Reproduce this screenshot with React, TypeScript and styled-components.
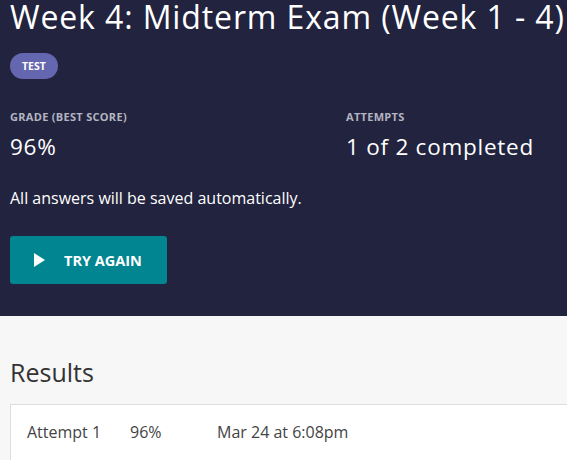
import styled, {createGlobalStyle} from "styled-components";

const GlobalStyle = createGlobalStyle`
    html, body {
        margin: 0;
        padding: 0;
        background: #f7f7f7;
        font-family: "Open Sans", "Liberation Sans", sans-serif;
    }
`

type Attempt = {
    label: string,
    score: string,
    date: string,
}

const attempts: Attempt[] = [
    {label: "Attempt 1", score: "96%", date: "Mar 24 at 6:08pm"},
]

const PlayIcon = () => (
    <svg width="11" height="14" viewBox="0 0 11 14" aria-hidden="true">
        <path d="M0 0 L11 7 L0 14 Z" fill="#fff"/>
    </svg>
)

export default function App() {
    return (
        <>
            <GlobalStyle/>
            <StyledHeader>
                <StyledTitle>Week 4: Midterm Exam (Week 1 - 4)</StyledTitle>
                <Badge>TEST</Badge>

                <StyledStats>
                    <StyledStat>
                        <StyledLabel>GRADE (BEST SCORE)</StyledLabel>
                        <StyledValue>96%</StyledValue>
                    </StyledStat>
                    <StyledStat>
                        <StyledLabel>ATTEMPTS</StyledLabel>
                        <StyledValue>1 of 2 completed</StyledValue>
                    </StyledStat>
                </StyledStats>

                <StyledNote>All answers will be saved automatically.</StyledNote>

                <StyledButton>
                    <PlayIcon/>
                    TRY AGAIN
                </StyledButton>
            </StyledHeader>

            <StyledResults>
                <StyledResultsTitle>Results</StyledResultsTitle>
                <StyledCard>
                    {attempts.map(a => (
                        <StyledRow key={a.label}>
                            <StyledCell $width={103}>{a.label}</StyledCell>
                            <StyledCell $width={87}>{a.score}</StyledCell>
                            <StyledCell>{a.date}</StyledCell>
                        </StyledRow>
                    ))}
                </StyledCard>
            </StyledResults>
        </>
    );
}

const StyledHeader = styled.header`
    background: #22233e;
    color: #fff;
    padding: 0 10px 32px;
    display: flex;
    flex-direction: column;
    align-items: flex-start;
`

const StyledTitle = styled.h1`
    margin: 0;
    font-size: 32px;
    font-weight: 400;
    line-height: 34px;
    white-space: nowrap;
    letter-spacing: 0.88px;
`

const Badge = styled.span`
    margin-top: 19px;
    background: #6466b0;
    color: #fff;
    font-size: 10.5px;
    font-weight: 700;
    height: 26px;
    padding: 0 12px;
    border-radius: 13px;
    display: flex;
    align-items: center;
`

const StyledStats = styled.div`
    margin-top: 31px;
    display: grid;
    grid-template-columns: 336px 1fr;
    width: 100%;
`

const StyledStat = styled.div`
    display: flex;
    flex-direction: column;
`

const StyledLabel = styled.span`
    font-size: 11px;
    font-weight: 700;
    letter-spacing: 0.3px;
    color: #b4b5c2;
    line-height: 14px;
`

const StyledValue = styled.span`
    margin-top: 8px;
    font-size: 22.5px;
    letter-spacing: 0.75px;
    line-height: 30px;
`

const StyledNote = styled.p`
    margin: 25px 0 0;
    font-size: 16px;
    line-height: 22px;
`

const StyledButton = styled.button`
    margin-top: 27px;
    width: 157px;
    height: 48px;
    border: none;
    border-radius: 3px;
    background: #008591;
    color: #fff;
    font-family: inherit;
    font-size: 14.5px;
    font-weight: 700;
    display: flex;
    align-items: center;
    gap: 19px;
    padding: 0 0 0 24px;
`

const StyledResults = styled.section`
    padding: 39px 0 0 10px;
`

const StyledResultsTitle = styled.h2`
    margin: 0;
    font-size: 25px;
    font-weight: 500;
    color: #333;
    line-height: 34px;
`

const StyledCard = styled.div`
    margin-top: 15px;
    background: #fff;
    border: 1px solid #ddd;
    border-right: none;
`

const StyledRow = styled.div`
    display: flex;
    padding: 16px 16px 20px;
    line-height: 22px;
    font-size: 16px;
    color: #444;
`

const StyledCell = styled.span<{ $width?: number }>`
    width: ${({$width}) => $width ? `${$width}px` : 'auto'};
`
